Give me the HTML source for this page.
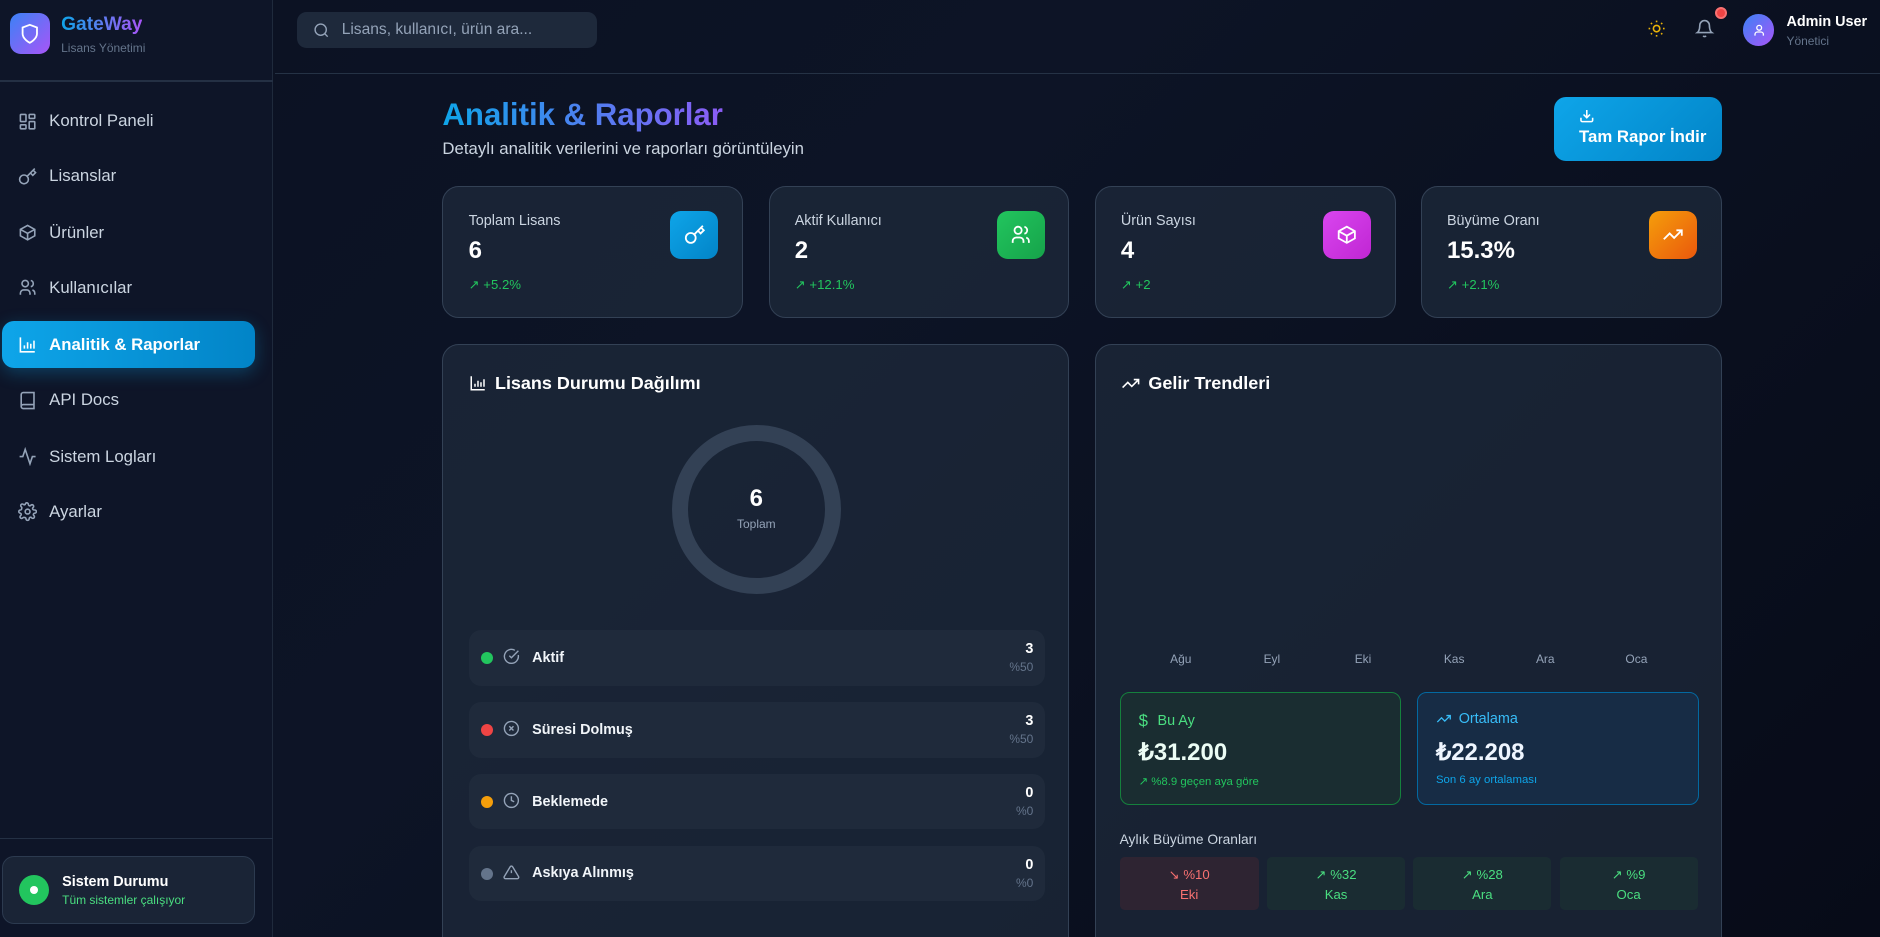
<!DOCTYPE html>
<html><head><meta charset="utf-8"><style>
*{box-sizing:border-box;margin:0;padding:0}
html,body{width:1880px;height:937px;overflow:hidden;background:#080d1c}
#r{zoom:1.19898;width:1568px;height:782px;position:relative;font-family:"Liberation Sans",sans-serif;color:#fff;background:linear-gradient(135deg,#0b1122 0%,#0d1426 40%,#070b18 100%);overflow:hidden}
.a{position:absolute}
svg{display:block}
.sb{left:0;top:0;width:228px;height:782px;background:#0e1528;border-right:1px solid #1f2a3c}
.nav{left:0;width:228px;height:40px;display:flex;align-items:center;padding-left:15px;font-size:14px;color:#cbd5e1;font-weight:500}
.nav svg{margin-right:10px}
.card{background:rgba(30,41,59,.75);border:1px solid #334155;border-radius:14px}
.stat .l{position:absolute;left:21px;top:22px;font-size:12px;color:#cbd5e1}
.stat .v{position:absolute;left:21px;top:42px;font-size:20px;font-weight:bold}
.stat .t{position:absolute;left:21px;top:75px;font-size:11px;color:#22c55e;display:flex;align-items:center;gap:4px}
.stat .i{position:absolute;right:20px;top:20px;width:40px;height:40px;border-radius:9px;display:flex;align-items:center;justify-content:center}
.row{left:21px;width:481px;height:46px;background:#1f2a3b;border-radius:10px}
.row .d{position:absolute;left:10px;top:18px;width:10px;height:10px;border-radius:50%}
.row svg{position:absolute;left:29px;top:15px}
.row .n{position:absolute;left:53px;top:16px;font-size:12px;font-weight:bold;color:#f1f5f9}
.row .c{position:absolute;right:10px;top:9px;font-size:12px;font-weight:bold;text-align:right;line-height:15px}
.row .c span{display:block;font-size:10px;color:#64748b;font-weight:normal}
.mo{top:256px;font-size:10px;color:#94a3b8;width:40px;text-align:center}
.tile{top:427px;height:44px;border-radius:4px;text-align:center;font-size:11px;padding-top:7px;line-height:16px}
</style></head><body><div id="r">
<div class="a sb">
 <div class="a" style="left:8px;top:11px;width:34px;height:34px;border-radius:9px;background:linear-gradient(135deg,#3b82f6,#a855f7);display:flex;align-items:center;justify-content:center"><svg width="18" height="18" viewBox="0 0 24 24" fill="none" stroke="#fff" stroke-width="2"><path d="M12 22s8-4 8-10V5l-8-3-8 3v7c0 6 8 10 8 10z"/></svg></div>
 <div class="a" style="left:51px;top:12px;font-size:16px;font-weight:bold;background:linear-gradient(90deg,#0ea5e9,#a855f7);-webkit-background-clip:text;color:transparent">GateWay</div>
 <div class="a" style="left:51px;top:34px;font-size:10px;color:#64748b">Lisans Yönetimi</div>
 <div class="a" style="left:0;top:67px;width:228px;height:1px;background:#243044"></div>
 <div class="a nav" style="top:81px"><svg width="16" height="16" viewBox="0 0 24 24" fill="none" stroke="#94a3b8" stroke-width="2"><rect x="3" y="3" width="7" height="9" rx="1"/><rect x="14" y="3" width="7" height="5" rx="1"/><rect x="14" y="12" width="7" height="9" rx="1"/><rect x="3" y="16" width="7" height="5" rx="1"/></svg>Kontrol Paneli</div>
 <div class="a nav" style="top:127px"><svg width="16" height="16" viewBox="0 0 24 24" fill="none" stroke="#94a3b8" stroke-width="2"><circle cx="7.5" cy="15.5" r="5.5"/><path d="M21 2l-9.6 9.6M15.5 7.5l3 3L22 7l-3-3"/></svg>Lisanslar</div>
 <div class="a nav" style="top:174px"><svg width="16" height="16" viewBox="0 0 24 24" fill="none" stroke="#94a3b8" stroke-width="2"><path d="M21 8l-9-5-9 5v8l9 5 9-5z"/><path d="M3 8l9 5 9-5M12 13v8"/></svg>Ürünler</div>
 <div class="a nav" style="top:220px"><svg width="16" height="16" viewBox="0 0 24 24" fill="none" stroke="#94a3b8" stroke-width="2"><circle cx="9" cy="7" r="4"/><path d="M3 21v-2a4 4 0 014-4h4a4 4 0 014 4v2M16 3.1a4 4 0 010 7.8M21 21v-2a4 4 0 00-3-3.9"/></svg>Kullanıcılar</div>
 <div class="a nav" style="left:2px;top:268px;width:211px;height:39px;border-radius:10px;background:linear-gradient(90deg,#0ea5e9,#0284c7);color:#fff;font-weight:bold;padding-left:13px;box-shadow:0 4px 14px rgba(14,165,233,.3)"><svg width="16" height="16" viewBox="0 0 24 24" fill="none" stroke="#fff" stroke-width="2"><path d="M3 3v18h18M8 17v-4M12 17V9M16 17v-6M20 17V7"/></svg>Analitik &amp; Raporlar</div>
 <div class="a nav" style="top:314px"><svg width="16" height="16" viewBox="0 0 24 24" fill="none" stroke="#94a3b8" stroke-width="2"><path d="M4 19.5A2.5 2.5 0 016.5 17H20V2H6.5A2.5 2.5 0 004 4.5v15zM4 19.5A2.5 2.5 0 006.5 22H20v-5"/></svg>API Docs</div>
 <div class="a nav" style="top:361px"><svg width="16" height="16" viewBox="0 0 24 24" fill="none" stroke="#94a3b8" stroke-width="2"><path d="M22 12h-4l-3 9L9 3l-3 9H2"/></svg>Sistem Logları</div>
 <div class="a nav" style="top:407px"><svg width="16" height="16" viewBox="0 0 24 24" fill="none" stroke="#94a3b8" stroke-width="2"><circle cx="12" cy="12" r="3"/><path d="M19.4 15a1.7 1.7 0 00.3 1.8l.1.1a2 2 0 11-2.8 2.8l-.1-.1a1.7 1.7 0 00-2.9 1.2V21a2 2 0 11-4 0v-.1A1.7 1.7 0 008 19.4a1.7 1.7 0 00-1.8.3l-.1.1a2 2 0 11-2.8-2.8l.1-.1A1.7 1.7 0 003 14H3a2 2 0 110-4h.1A1.7 1.7 0 004.6 8a1.7 1.7 0 00-.3-1.8l-.1-.1a2 2 0 112.8-2.8l.1.1A1.7 1.7 0 009 3.1V3a2 2 0 114 0v.1a1.7 1.7 0 002.9 1.2l.1-.1a2 2 0 112.8 2.8l-.1.1a1.7 1.7 0 00-.3 1.8V9a1.7 1.7 0 001.5 1H21a2 2 0 110 4h-.1a1.7 1.7 0 00-1.5 1z"/></svg>Ayarlar</div>
 <div class="a" style="left:0;top:699px;width:228px;height:1px;background:#243044"></div>
 <div class="a" style="left:2px;top:714px;width:211px;height:57px;border-radius:10px;background:#1a2436;border:1px solid #2c3a4f">
  <div class="a" style="left:13px;top:15px;width:25px;height:25px;border-radius:50%;background:#22c55e;display:flex;align-items:center;justify-content:center"><div style="width:7px;height:7px;border-radius:50%;background:#fff"></div></div>
  <div class="a" style="left:49px;top:14px;font-size:12px;font-weight:bold">Sistem Durumu</div>
  <div class="a" style="left:49px;top:30px;font-size:10px;color:#4ade80">Tüm sistemler çalışıyor</div>
 </div>
</div>
<div class="a" style="left:229px;top:61px;width:1339px;height:1px;background:#253245"></div>
<div class="a" style="left:248px;top:10px;width:250px;height:30px;border-radius:8px;background:#1e293b;display:flex;align-items:center;padding-left:13px;font-size:13px;color:#94a3b8"><svg width="14" height="14" viewBox="0 0 24 24" fill="none" stroke="#94a3b8" stroke-width="2" style="margin-right:10px"><circle cx="11" cy="11" r="8"/><path d="M21 21l-4.3-4.3"/></svg>Lisans, kullanıcı, ürün ara...</div>
<svg class="a" style="left:1374px;top:16px" width="16" height="16" viewBox="0 0 24 24" fill="none" stroke="#eab308" stroke-width="2"><circle cx="12" cy="12" r="4"/><path d="M12 2v2M12 20v2M4.9 4.9l1.4 1.4M17.7 17.7l1.4 1.4M2 12h2M20 12h2M6.3 17.7l-1.4 1.4M19.1 4.9l-1.4 1.4"/></svg>
<svg class="a" style="left:1414px;top:16px" width="16" height="16" viewBox="0 0 24 24" fill="none" stroke="#94a3b8" stroke-width="2"><path d="M6 8a6 6 0 0112 0c0 7 3 9 3 9H3s3-2 3-9M10.3 21a1.9 1.9 0 003.4 0"/></svg>
<div class="a" style="left:1430px;top:6px;width:10px;height:10px;border-radius:50%;background:#ef4444;border:2px solid #f87171"></div>
<div class="a" style="left:1454px;top:12px;width:26px;height:26px;border-radius:50%;background:linear-gradient(135deg,#3b82f6,#a855f7);display:flex;align-items:center;justify-content:center"><svg width="12" height="12" viewBox="0 0 24 24" fill="none" stroke="#fff" stroke-width="2.2"><circle cx="12" cy="8" r="4"/><path d="M5 21v-2a4 4 0 014-4h6a4 4 0 014 4v2"/></svg></div>
<div class="a" style="left:1490px;top:12px;font-size:12px;font-weight:bold">Admin User</div>
<div class="a" style="left:1490px;top:28px;font-size:10px;color:#64748b">Yönetici</div>

<div class="a" style="left:369px;top:81px;font-size:26px;font-weight:bold;white-space:nowrap;background:linear-gradient(90deg,#0ea5e9,#8b5cf6);-webkit-background-clip:text;color:transparent">Analitik &amp; Raporlar</div>
<div class="a" style="left:369px;top:116px;font-size:14px;color:#cbd5e1">Detaylı analitik verilerini ve raporları görüntüleyin</div>
<div class="a" style="left:1296px;top:81px;width:140px;height:53px;border-radius:10px;background:linear-gradient(135deg,#0ea5e9,#0284c7);padding:9px 0 0 21px;font-size:14px;font-weight:bold"><svg width="13" height="13" viewBox="0 0 24 24" fill="none" stroke="#fff" stroke-width="2.4" style="margin-bottom:3px"><path d="M21 15v4a2 2 0 01-2 2H5a2 2 0 01-2-2v-4M7 10l5 5 5-5M12 15V3"/></svg>Tam Rapor İndir</div>

<div class="a card stat" style="left:369px;top:155px;width:251px;height:110px"><div class="l">Toplam Lisans</div><div class="v">6</div><div class="t">↗ +5.2%</div><div class="i" style="background:linear-gradient(135deg,#0ea5e9,#0284c7)"><svg width="18" height="18" viewBox="0 0 24 24" fill="none" stroke="#fff" stroke-width="2"><circle cx="7.5" cy="15.5" r="5.5"/><path d="M21 2l-9.6 9.6M15.5 7.5l3 3L22 7l-3-3"/></svg></div></div>
<div class="a card stat" style="left:641px;top:155px;width:251px;height:110px"><div class="l">Aktif Kullanıcı</div><div class="v">2</div><div class="t">↗ +12.1%</div><div class="i" style="background:linear-gradient(135deg,#22c55e,#16a34a)"><svg width="18" height="18" viewBox="0 0 24 24" fill="none" stroke="#fff" stroke-width="2"><circle cx="9" cy="7" r="4"/><path d="M3 21v-2a4 4 0 014-4h4a4 4 0 014 4v2M16 3.1a4 4 0 010 7.8M21 21v-2a4 4 0 00-3-3.9"/></svg></div></div>
<div class="a card stat" style="left:913px;top:155px;width:251px;height:110px"><div class="l">Ürün Sayısı</div><div class="v">4</div><div class="t">↗ +2</div><div class="i" style="background:linear-gradient(135deg,#d946ef,#c026d3)"><svg width="18" height="18" viewBox="0 0 24 24" fill="none" stroke="#fff" stroke-width="2"><path d="M21 8l-9-5-9 5v8l9 5 9-5z"/><path d="M3 8l9 5 9-5M12 13v8"/></svg></div></div>
<div class="a card stat" style="left:1185px;top:155px;width:251px;height:110px"><div class="l">Büyüme Oranı</div><div class="v">15.3%</div><div class="t">↗ +2.1%</div><div class="i" style="background:linear-gradient(135deg,#f59e0b,#ea580c)"><svg width="18" height="18" viewBox="0 0 24 24" fill="none" stroke="#fff" stroke-width="2"><path d="M22 7l-8.5 8.5-5-5L2 17M16 7h6v6"/></svg></div></div>

<div class="a card" style="left:369px;top:287px;width:523px;height:520px">
 <div class="a" style="left:21px;top:23px;font-size:15px;font-weight:bold;display:flex;align-items:center;gap:7px"><svg width="15" height="15" viewBox="0 0 24 24" fill="none" stroke="#fff" stroke-width="2"><path d="M3 3v18h18M8 17v-4M12 17V9M16 17v-6M20 17V7"/></svg>Lisans Durumu Dağılımı</div>
 <div class="a" style="left:191px;top:67px;width:141px;height:141px;border-radius:50%;border:14px solid #334155"></div>
 <div class="a" style="left:211px;top:117px;width:100px;text-align:center;font-size:20px;font-weight:bold">6</div>
 <div class="a" style="left:211px;top:143px;width:100px;text-align:center;font-size:10px;color:#94a3b8">Toplam</div>
 <div class="a row" style="top:238px"><div class="d" style="background:#22c55e"></div><svg width="14" height="14" viewBox="0 0 24 24" fill="none" stroke="#94a3b8" stroke-width="2"><path d="M21.8 10A10 10 0 1117 3.3"/><path d="M9 11l3 3L22 4"/></svg><div class="n">Aktif</div><div class="c">3<span>%50</span></div></div>
 <div class="a row" style="top:298px"><div class="d" style="background:#ef4444"></div><svg width="14" height="14" viewBox="0 0 24 24" fill="none" stroke="#94a3b8" stroke-width="2"><circle cx="12" cy="12" r="10"/><path d="M15 9l-6 6M9 9l6 6"/></svg><div class="n">Süresi Dolmuş</div><div class="c">3<span>%50</span></div></div>
 <div class="a row" style="top:358px"><div class="d" style="background:#f59e0b"></div><svg width="14" height="14" viewBox="0 0 24 24" fill="none" stroke="#94a3b8" stroke-width="2"><circle cx="12" cy="12" r="10"/><path d="M12 6v6l4 2"/></svg><div class="n">Beklemede</div><div class="c">0<span>%0</span></div></div>
 <div class="a row" style="top:418px"><div class="d" style="background:#64748b"></div><svg width="14" height="14" viewBox="0 0 24 24" fill="none" stroke="#94a3b8" stroke-width="2"><path d="M10.3 3.9L1.8 18a2 2 0 001.7 3h17a2 2 0 001.7-3L13.7 3.9a2 2 0 00-3.4 0zM12 9v4M12 17h.01"/></svg><div class="n">Askıya Alınmış</div><div class="c">0<span>%0</span></div></div>
</div>

<div class="a card" style="left:913px;top:287px;width:523px;height:520px">
 <div class="a" style="left:21px;top:23px;font-size:15px;font-weight:bold;display:flex;align-items:center;gap:7px"><svg width="16" height="16" viewBox="0 0 24 24" fill="none" stroke="#fff" stroke-width="2"><path d="M22 7l-8.5 8.5-5-5L2 17M16 7h6v6"/></svg>Gelir Trendleri</div>
 <div class="a mo" style="left:51px">Ağu</div><div class="a mo" style="left:127px">Eyl</div><div class="a mo" style="left:203px">Eki</div><div class="a mo" style="left:279px">Kas</div><div class="a mo" style="left:355px">Ara</div><div class="a mo" style="left:431px">Oca</div>
 <div class="a" style="left:20px;top:289px;width:235px;height:95px;border-radius:8px;border:1px solid #15803d;background:#1a2d31">
  <div class="a" style="left:15px;top:15px;font-size:12px;color:#4ade80;display:flex;gap:8px;align-items:center"><span style="font-size:14px">$</span>Bu Ay</div>
  <div class="a" style="left:15px;top:38px;font-size:20px;font-weight:bold;color:#ecfdf5">₺31.200</div>
  <div class="a" style="left:15px;top:68px;font-size:9.5px;color:#22c55e">↗ %8.9 geçen aya göre</div>
 </div>
 <div class="a" style="left:268px;top:289px;width:235px;height:95px;border-radius:8px;border:1px solid #0369a1;background:#172c45">
  <div class="a" style="left:15px;top:15px;font-size:12px;color:#38bdf8;display:flex;gap:6px;align-items:center"><svg width="13" height="13" viewBox="0 0 24 24" fill="none" stroke="#38bdf8" stroke-width="2"><path d="M22 7l-8.5 8.5-5-5L2 17M16 7h6v6"/></svg>Ortalama</div>
  <div class="a" style="left:15px;top:38px;font-size:20px;font-weight:bold;color:#eff6ff">₺22.208</div>
  <div class="a" style="left:15px;top:68px;font-size:9.5px;color:#0ea5e9">Son 6 ay ortalaması</div>
 </div>
 <div class="a" style="left:20px;top:406px;font-size:11.5px;color:#cbd5e1">Aylık Büyüme Oranları</div>
 <div class="a tile" style="left:20px;width:116px;background:#2e2432;color:#f87171">↘ %10<br>Eki</div>
 <div class="a tile" style="left:143px;width:115px;background:#1a2c32;color:#4ade80">↗ %32<br>Kas</div>
 <div class="a tile" style="left:265px;width:115px;background:#1a2c32;color:#4ade80">↗ %28<br>Ara</div>
 <div class="a tile" style="left:387px;width:115px;background:#1a2c32;color:#4ade80">↗ %9<br>Oca</div>
</div>
</div></body></html>
